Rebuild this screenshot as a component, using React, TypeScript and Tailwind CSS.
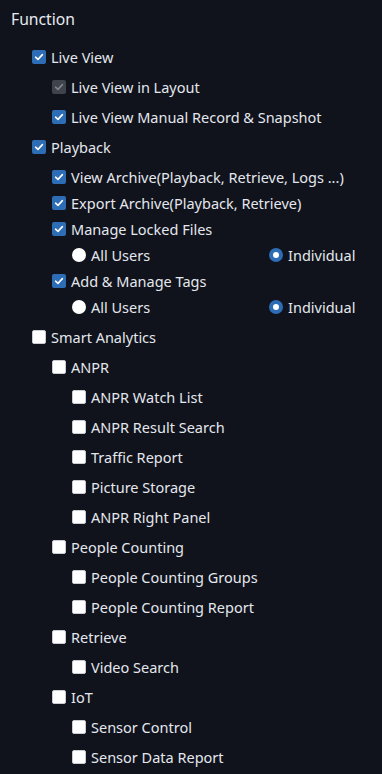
import React from "react";

type Item = {
  label: string;
  level: number;
  kind?: "check" | "radio";
  checked?: boolean;
  disabled?: boolean;
  gap: number;
  right?: string;
};

const rows: Item[] = [
  { label: "Live View", level: 1, checked: true, gap: 30 },
  { label: "Live View in Layout", level: 2, checked: true, disabled: true, gap: 30 },
  { label: "Live View Manual Record & Snapshot", level: 2, checked: true, gap: 30 },
  { label: "Playback", level: 1, checked: true, gap: 30 },
  { label: "View Archive(Playback, Retrieve, Logs ...)", level: 2, checked: true, gap: 30 },
  { label: "Export Archive(Playback, Retrieve)", level: 2, checked: true, gap: 26 },
  { label: "Manage Locked Files", level: 2, checked: true, gap: 26 },
  { label: "All Users", level: 3, kind: "radio", gap: 26, right: "Individual" },
  { label: "Add & Manage Tags", level: 2, checked: true, gap: 26 },
  { label: "All Users", level: 3, kind: "radio", gap: 26, right: "Individual" },
  { label: "Smart Analytics", level: 1, gap: 30 },
  { label: "ANPR", level: 2, gap: 30 },
  { label: "ANPR Watch List", level: 3, gap: 30 },
  { label: "ANPR Result Search", level: 3, gap: 30 },
  { label: "Traffic Report", level: 3, gap: 30 },
  { label: "Picture Storage", level: 3, gap: 30 },
  { label: "ANPR Right Panel", level: 3, gap: 30 },
  { label: "People Counting", level: 2, gap: 30 },
  { label: "People Counting Groups", level: 3, gap: 30 },
  { label: "People Counting Report", level: 3, gap: 30 },
  { label: "Retrieve", level: 2, gap: 30 },
  { label: "Video Search", level: 3, gap: 30 },
  { label: "IoT", level: 2, gap: 30 },
  { label: "Sensor Control", level: 3, gap: 30 },
  { label: "Sensor Data Report", level: 3, gap: 30 },
];

function Check({ checked, disabled }: { checked?: boolean; disabled?: boolean }) {
  if (!checked) {
    return <span className="block w-[14px] h-[14px] rounded-[2px] bg-white border border-[#c9ccd2] shrink-0" />;
  }
  return (
    <span
      className={`flex items-center justify-center w-[14px] h-[14px] rounded-[2px] shrink-0 ${
        disabled ? "bg-[#3f434b]" : "bg-[#2d6db5]"
      }`}
    >
      <svg width="10" height="10" viewBox="0 0 10 10" fill="none">
        <path
          d="M1.6 5.2 L4 7.4 L8.4 2.6"
          stroke={disabled ? "#80848c" : "#ffffff"}
          strokeWidth="1.6"
          strokeLinecap="round"
          strokeLinejoin="round"
        />
      </svg>
    </span>
  );
}

function Radio({ on }: { on?: boolean }) {
  if (on) {
    return (
      <span className="flex items-center justify-center w-[14px] h-[14px] rounded-full bg-[#2d6db5] shrink-0">
        <span className="block w-[6px] h-[6px] rounded-full bg-white" />
      </span>
    );
  }
  return <span className="block w-[14px] h-[14px] rounded-full bg-white shrink-0" />;
}

export default function App() {
  return (
    <div
      className="w-[382px] h-[774px] bg-[#10131b] text-[#e4e7ee] overflow-hidden"
      style={{ fontFamily: '"Noto Sans", "Open Sans", sans-serif' }}
    >
      <div className="pl-[11px] pt-[8px] h-[22px] text-[15.7px] leading-[22px] text-[#e8eaf0]">Function</div>
      <div className="pt-[25px]">
        {rows.map((r, i) => (
          <div
            key={i}
            className="flex items-center h-[20px] text-[14.5px] leading-[20px]"
            style={{
              paddingLeft: 32 + (r.level - 1) * 20,
              marginTop: i === 0 ? 0 : r.gap - 20,
            }}
          >
            {r.kind === "radio" ? <Radio /> : <Check checked={r.checked} disabled={r.disabled} />}
            <span className="ml-[5px] whitespace-nowrap">{r.label}</span>
            {r.right && (
              <div className="flex items-center absolute left-[269px]">
                <Radio on />
                <span className="ml-[5px]">{r.right}</span>
              </div>
            )}
          </div>
        ))}
      </div>
    </div>
  );
}
